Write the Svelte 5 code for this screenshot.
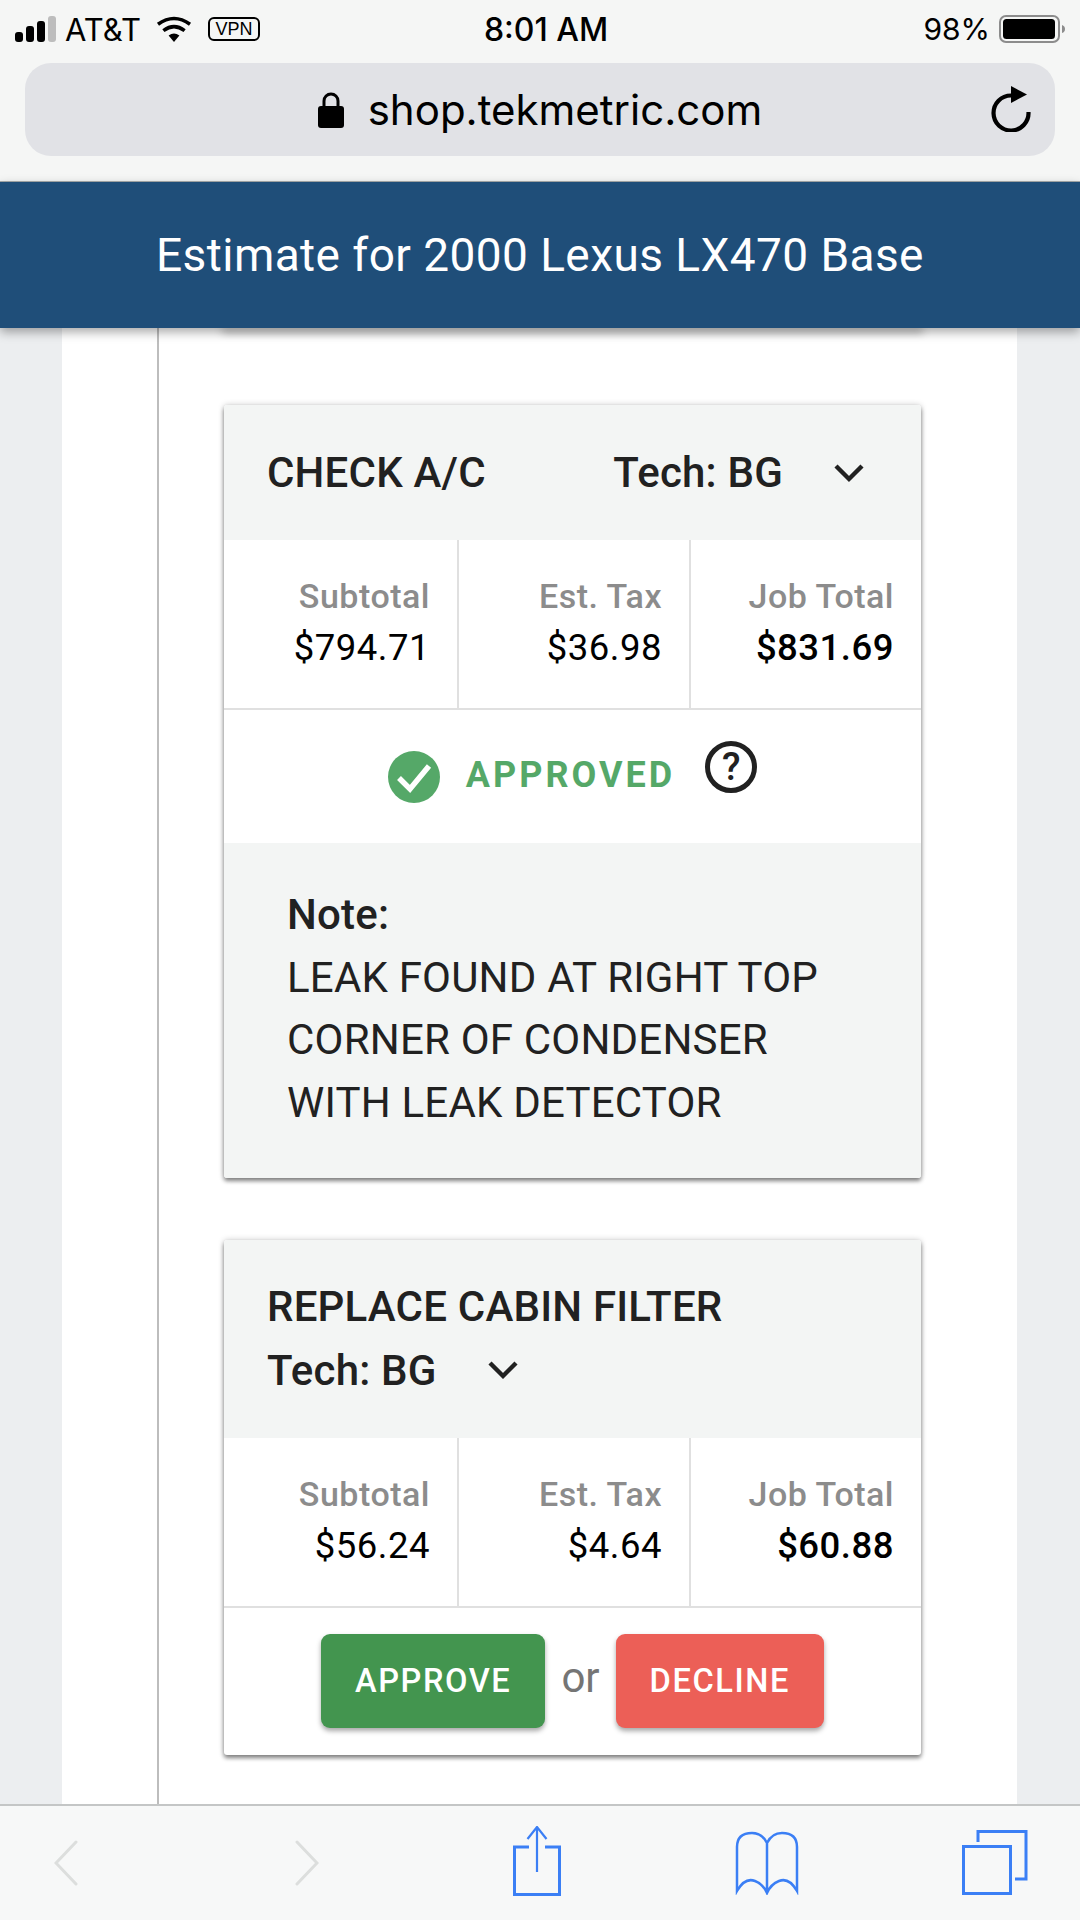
<script lang="ts">
  const jobs = [
    { title: 'CHECK A/C', subtotal: '$794.71', tax: '$36.98', total: '$831.69', approved: true, note: ['LEAK FOUND AT RIGHT TOP', 'CORNER OF CONDENSER', 'WITH LEAK DETECTOR'] },
    { title: 'REPLACE CABIN FILTER', subtotal: '$56.24', tax: '$4.64', total: '$60.88', approved: false, note: [] as string[] },
  ];
</script>

<div class="page">
  <div class="chrome">
    <div class="status">
      <div class="status-left">
        <span class="signal"><i></i><i></i><i></i><i class="off"></i></span>
        <span class="carrier">AT&amp;T</span>
        <svg class="wifi" viewBox="0 0 36 26" width="36" height="26">
          <path d="M18 26 L12.6 19.6 Q18 15.6 23.4 19.6 Z" fill="#000" />
          <path d="M7.4 14.6 Q18 6.6 28.6 14.6" fill="none" stroke="#000" stroke-width="3.6" />
          <path d="M2 8.2 Q18 -3.2 34 8.2" fill="none" stroke="#000" stroke-width="3.6" />
        </svg>
        <span class="vpn">VPN</span>
      </div>
      <div class="time">8:01 AM</div>
      <div class="status-right">
        <span class="pct">98%</span>
        <svg viewBox="0 0 68 30" width="68" height="30">
          <rect x="1" y="2" width="59" height="26" rx="6" fill="none" stroke="#8c8c8c" stroke-width="2" />
          <rect x="4" y="5" width="52" height="20" rx="3.5" fill="#000" />
          <path d="M63 11 Q66 12 66 15 Q66 18 63 19 Z" fill="#8c8c8c" />
        </svg>
      </div>
    </div>
    <div class="address">
      <svg viewBox="0 0 26 36" width="26" height="36">
        <path d="M6 16 V9 a7 7 0 0 1 14 0 V16" fill="none" stroke="#000" stroke-width="3" />
        <rect x="0" y="14" width="26" height="22" rx="3" fill="#000" />
      </svg>
      <span class="url">shop.tekmetric.com</span>
      <svg class="reload" viewBox="0 0 40 46" width="40" height="46">
        <path d="M37.5 26 A17.5 17.5 0 1 1 20 9.5" fill="none" stroke="#000" stroke-width="4.2" />
        <path d="M20 0 L36 8.5 L20 17 Z" fill="#000" />
      </svg>
    </div>
  </div>

  <header class="topbar">Estimate for 2000 Lexus LX470 Base</header>

  <main class="main">
    <div class="column">
      <div class="rail">
        <div class="prev-card"></div>
        {#each jobs as job (job.title)}
          <section class="card">
            <div class="head" class:stacked={!job.approved}>
              <span class="job-title">{job.title}</span>
              <span class="tech">
                Tech: BG
                <svg viewBox="0 0 32 20" width="32" height="20">
                  <path d="M3 3 L16 16 L29 3" fill="none" stroke="#212121" stroke-width="4.4" />
                </svg>
              </span>
            </div>
            <div class="stats">
              <div class="stat"><span class="label">Subtotal</span><span class="value">{job.subtotal}</span></div>
              <div class="stat"><span class="label">Est. Tax</span><span class="value">{job.tax}</span></div>
              <div class="stat"><span class="label">Job Total</span><span class="value strong">{job.total}</span></div>
            </div>
            {#if job.approved}
              <div class="approved">
                <svg class="check" viewBox="0 0 52 52" width="52" height="52">
                  <circle cx="26" cy="26" r="26" fill="#55a868" />
                  <path d="M11 27 L22 38 L41 15" fill="none" stroke="#fff" stroke-width="5.5" />
                </svg>
                <span class="approved-text">APPROVED</span>
                <span class="help">?</span>
              </div>
              <div class="note">
                <strong>Note:</strong>
                {#each job.note as line (line)}
                  <span>{line}</span>
                {/each}
              </div>
            {:else}
              <div class="actions">
                <button class="btn approve">APPROVE</button>
                <span class="or">or</span>
                <button class="btn decline">DECLINE</button>
              </div>
            {/if}
          </section>
        {/each}
      </div>
    </div>
  </main>

  <nav class="toolbar">
    <svg viewBox="0 0 24 46" width="24" height="46">
      <path d="M22 2 L2 23 L22 44" fill="none" stroke="#dcdedd" stroke-width="3" stroke-linecap="round" />
    </svg>
    <svg viewBox="0 0 24 46" width="24" height="46">
      <path d="M2 2 L22 23 L2 44" fill="none" stroke="#dcdedd" stroke-width="3" stroke-linecap="round" />
    </svg>
    <svg viewBox="0 0 48 74" width="48" height="74">
      <path d="M16 21 H1.5 V68.5 H46.5 V21 H32" fill="none" stroke="#3b7ff5" stroke-width="3" />
      <path d="M24 1 V46 M14.5 13 L24 1 L33.5 13" fill="none" stroke="#3b7ff5" stroke-width="2.2" />
    </svg>
    <svg viewBox="0 0 64 64" width="64" height="64">
      <path d="M32 12 Q27 2 17 2 Q2 2 2 16 V60 Q10 46 20 50 Q28 53 32 62 Q36 53 44 50 Q54 46 62 60 V16 Q62 2 47 2 Q37 2 32 12 Z M32 12 V62" fill="none" stroke="#3b7ff5" stroke-width="2.5" />
    </svg>
    <svg viewBox="0 0 66 66" width="66" height="66">
      <path d="M16 12 V1.5 H64 V49 H53" fill="none" stroke="#3b7ff5" stroke-width="3" />
      <rect x="1.5" y="16.5" width="47" height="47" fill="none" stroke="#3b7ff5" stroke-width="3" />
    </svg>
  </nav>
</div>

<style>
  :global(body) {
    margin: 0;
    background: #eceef0;
  }
  .page {
    width: 1080px;
    height: 1920px;
    display: flex;
    flex-direction: column;
    overflow: hidden;
    font-family: Roboto, "Liberation Sans", sans-serif;
    color: #212121;
  }

  .chrome {
    height: 182px;
    flex: none;
    box-sizing: border-box;
    background: #f5f6f5;
    border-bottom: 1px solid #a9adad;
    font-family: Inter, "Liberation Sans", sans-serif;
    color: #000;
  }
  .status {
    height: 63px;
    display: grid;
    grid-template-columns: 1fr auto 1fr;
    align-items: center;
    padding: 0 13px 5px 15px;
    box-sizing: border-box;
    font-size: 31px;
  }
  .status-left {
    display: flex;
    align-items: center;
  }
  .signal {
    display: flex;
    align-items: flex-end;
    gap: 3px;
    height: 26px;
  }
  .signal i {
    width: 8px;
    border-radius: 3px;
    background: #000;
  }
  .signal i:nth-child(1) { height: 10px; }
  .signal i:nth-child(2) { height: 16px; }
  .signal i:nth-child(3) { height: 21px; }
  .signal i:nth-child(4) { height: 26px; }
  .signal i.off { background: #bdbdbd; }
  .carrier {
    margin-left: 9px;
  }
  .wifi {
    margin-left: 15px;
  }
  .vpn {
    margin-left: 16px;
    width: 52px;
    height: 24px;
    box-sizing: border-box;
    border: 2px solid #000;
    border-radius: 6px;
    font-size: 18px;
    line-height: 20px;
    text-align: center;
    font-family: "Liberation Sans", sans-serif;
  }
  .time {
    font-weight: 500;
    font-size: 32px;
    margin-left: 10px;
  }
  .status-right {
    display: flex;
    align-items: center;
    justify-content: flex-end;
    gap: 9px;
  }
  .pct {
    font-size: 30px;
  }

  .address {
    margin: 0 25px;
    height: 93px;
    border-radius: 26px;
    background: #e1e2e6;
    display: flex;
    align-items: center;
    justify-content: center;
    gap: 24px;
    position: relative;
    font-size: 42px;
  }
  .reload {
    position: absolute;
    right: 24px;
    top: 23px;
  }

  .topbar {
    height: 146px;
    flex: none;
    position: relative;
    z-index: 2;
    background: #1f4e79;
    color: #fff;
    display: flex;
    align-items: center;
    justify-content: center;
    font-size: 46px;
    letter-spacing: 0.43px;
    box-shadow: 0 4px 10px rgba(0, 0, 0, 0.35);
  }

  .main {
    flex: 1;
    min-height: 0;
    padding: 0 63px 0 62px;
    overflow: hidden;
  }
  .column {
    height: 100%;
    background: #fff;
    padding-left: 95px;
  }
  .rail {
    height: 100%;
    box-sizing: border-box;
    border-left: 2px solid #bdbdbd;
    padding-left: 65px;
    width: 763px;
    display: flex;
    flex-direction: column;
  }
  .prev-card {
    height: 0;
    width: 697px;
    box-shadow: 0 2px 8px 2px rgba(0, 0, 0, 0.4);
  }

  .card {
    width: 697px;
    margin-top: 77px;
    background: #fff;
    border-radius: 3px;
    box-shadow: 0 3px 4px rgba(0, 0, 0, 0.45), 0 0 6px rgba(0, 0, 0, 0.2);
    overflow: hidden;
  }
  .card + .card {
    margin-top: 62px;
  }
  .head {
    height: 135px;
    box-sizing: border-box;
    background: #f3f5f4;
    padding: 0 56px 0 43px;
    display: flex;
    align-items: center;
    justify-content: space-between;
    font-size: 42px;
    font-weight: 500;
    letter-spacing: 0.2px;
  }
  .head.stacked {
    height: 198px;
    flex-direction: column;
    align-items: flex-start;
    justify-content: center;
    gap: 15px;
    padding-bottom: 2px;
  }
  .tech {
    display: flex;
    align-items: center;
    gap: 50px;
  }

  .stats {
    height: 170px;
    box-sizing: border-box;
    display: grid;
    grid-template-columns: 235px 232px 230px;
    border-bottom: 2px solid #e0e0e0;
  }
  .stat {
    display: flex;
    flex-direction: column;
    align-items: flex-end;
    padding: 37px 27px 0 0;
    gap: 14px;
    line-height: 38px;
    letter-spacing: 0.5px;
    border-right: 2px solid #e0e0e0;
  }
  .stat:last-child {
    border-right: 0;
  }
  .label {
    color: #8c8c8c;
    font-size: 34px;
    font-weight: 500;
  }
  .value {
    color: #000;
    font-size: 36.5px;
  }
  .value.strong {
    font-weight: 500;
  }

  .approved {
    height: 133px;
    display: flex;
    align-items: center;
    justify-content: center;
  }
  .approved-text {
    margin-left: 26px;
    color: #55a868;
    font-size: 36px;
    font-weight: 700;
    letter-spacing: 3px;
    margin-top: -3px;
  }
  .help {
    margin-left: 30px;
    margin-top: -20px;
    width: 52px;
    height: 52px;
    box-sizing: border-box;
    border: 5px solid #212121;
    border-radius: 50%;
    font-size: 38px;
    font-weight: 500;
    line-height: 42px;
    text-align: center;
  }

  .note {
    height: 335px;
    box-sizing: border-box;
    background: #f3f5f4;
    padding: 41px 63px 0;
    display: flex;
    flex-direction: column;
    font-size: 42px;
    line-height: 62.7px;
    letter-spacing: 0.2px;
  }
  .note strong {
    font-weight: 500;
  }

  .actions {
    height: 147px;
    box-sizing: border-box;
    padding-top: 26px;
    display: flex;
    align-items: flex-start;
    justify-content: center;
    gap: 16px;
  }
  .btn {
    height: 94px;
    border: 0;
    border-radius: 9px;
    padding: 0 34px;
    color: #fff;
    font-family: inherit;
    font-size: 32.6px;
    font-weight: 500;
    letter-spacing: 1.6px;
    box-shadow: 0 3px 5px rgba(0, 0, 0, 0.35);
  }
  .approve {
    background: #43954f;
  }
  .decline {
    background: #ec5f57;
  }
  .or {
    color: #757575;
    font-size: 42px;
    line-height: 88px;
  }

  .toolbar {
    height: 116px;
    flex: none;
    box-sizing: border-box;
    background: #f7f8f8;
    border-top: 2px solid #c4c6c6;
    display: grid;
    grid-template-columns: 132px 350px 110px 350px 106px;
    justify-items: center;
    align-items: center;
    position: relative;
    z-index: 2;
  }
</style>
